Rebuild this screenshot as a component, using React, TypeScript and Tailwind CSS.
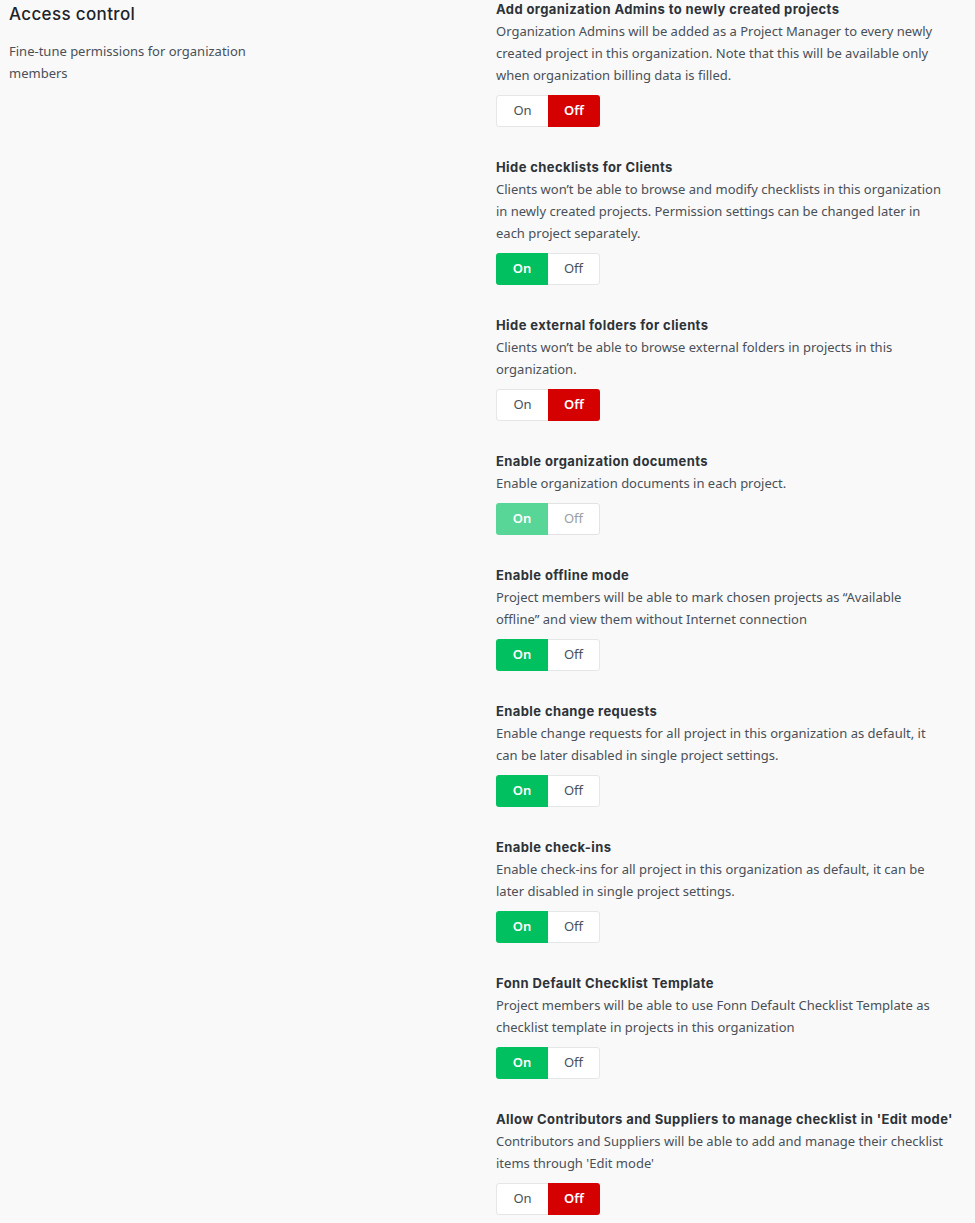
import React from "react";

type Item = { title: string; lines: string[]; state: "on" | "off" | "disabled-on" };

const items: Item[] = [
  {
    title: "Add organization Admins to newly created projects",
    lines: [
      "Organization Admins will be added as a Project Manager to every newly",
      "created project in this organization. Note that this will be available only",
      "when organization billing data is filled.",
    ],
    state: "off",
  },
  {
    title: "Hide checklists for Clients",
    lines: [
      "Clients won\u2019t be able to browse and modify checklists in this organization",
      "in newly created projects. Permission settings can be changed later in",
      "each project separately.",
    ],
    state: "on",
  },
  {
    title: "Hide external folders for clients",
    lines: ["Clients won\u2019t be able to browse external folders in projects in this", "organization."],
    state: "off",
  },
  {
    title: "Enable organization documents",
    lines: ["Enable organization documents in each project."],
    state: "disabled-on",
  },
  {
    title: "Enable offline mode",
    lines: [
      "Project members will be able to mark chosen projects as \u201cAvailable",
      "offline\u201d and view them without Internet connection",
    ],
    state: "on",
  },
  {
    title: "Enable change requests",
    lines: [
      "Enable change requests for all project in this organization as default, it",
      "can be later disabled in single project settings.",
    ],
    state: "on",
  },
  {
    title: "Enable check-ins",
    lines: [
      "Enable check-ins for all project in this organization as default, it can be",
      "later disabled in single project settings.",
    ],
    state: "on",
  },
  {
    title: "Fonn Default Checklist Template",
    lines: [
      "Project members will be able to use Fonn Default Checklist Template as",
      "checklist template in projects in this organization",
    ],
    state: "on",
  },
  {
    title: "Allow Contributors and Suppliers to manage checklist in 'Edit mode'",
    lines: ["Contributors and Suppliers will be able to add and manage their checklist", "items through 'Edit mode'"],
    state: "off",
  },
];

function Toggle({ state }: { state: Item["state"] }) {
  if (state === "off") {
    return (
      <div className="flex h-[32px] w-[104px] rounded-[3px] overflow-hidden text-[13px]">
        <div className="flex w-[52px] items-center justify-center bg-white border border-r-0 border-[#e6e6e6] rounded-l-[3px] text-[#4a5058]">
          On
        </div>
        <div className="flex w-[52px] items-center justify-center bg-[#d50000] text-white font-semibold">Off</div>
      </div>
    );
  }
  if (state === "on") {
    return (
      <div className="flex h-[32px] w-[104px] rounded-[3px] overflow-hidden text-[13px]">
        <div className="flex w-[52px] items-center justify-center bg-[#00c060] text-white font-semibold">On</div>
        <div className="flex w-[52px] items-center justify-center bg-white border border-l-0 border-[#e6e6e6] rounded-r-[3px] text-[#4a5058]">
          Off
        </div>
      </div>
    );
  }
  return (
    <div className="flex h-[32px] w-[104px] rounded-[3px] overflow-hidden text-[13px]">
      <div className="flex w-[52px] items-center justify-center bg-[#57d698] text-white font-semibold">On</div>
      <div className="flex w-[52px] items-center justify-center bg-white border border-l-0 border-[#e3e3e3] rounded-r-[3px] text-[#9a9ea3]">
        Off
      </div>
    </div>
  );
}

export default function App() {
  return (
    <div
      className="min-h-[1223px] bg-[#f9f9f9] flex"
      style={{ fontFamily: "'Noto Sans', 'Open Sans', sans-serif" }}
    >
      <div className="w-[496px] shrink-0 pl-[9px] pt-[2px]">
        <h2
          className="text-[17px] font-medium text-[#1f2329] leading-[24px] tracking-[0.35px]"
          style={{ fontFamily: "Inter, 'Noto Sans', sans-serif" }}
        >
          Access control
        </h2>
        <p className="mt-[14px] text-[13px] leading-[22px] text-[#4a5058] w-[260px]">
          Fine-tune permissions for organization members
        </p>
      </div>
      <div className="flex flex-col gap-[31px] pt-0 pb-[10px]">
        {items.map((it) => (
          <div key={it.title} className="flex flex-col">
            <div
              className="text-[13px] font-bold text-[#2d3338] leading-[19px] mb-[1px] whitespace-nowrap tracking-[0.4px]"
              style={{ fontFamily: "Inter, 'Noto Sans', sans-serif" }}
            >
              {it.title}
            </div>
            <div className="text-[13px] leading-[22px] text-[#4a5058]">
              {it.lines.map((l) => (
                <div key={l} className="whitespace-nowrap">
                  {l}
                </div>
              ))}
            </div>
            <div className="mt-[9px]">
              <Toggle state={it.state} />
            </div>
          </div>
        ))}
      </div>
    </div>
  );
}
